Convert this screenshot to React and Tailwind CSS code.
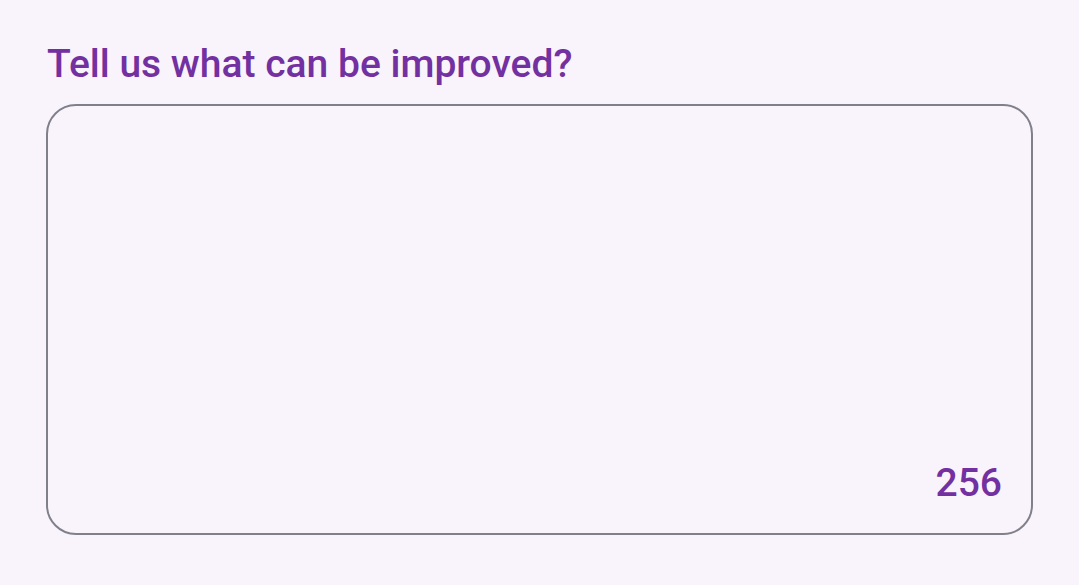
export default function App() {
  return (
    <div className="w-[1079px] h-[585px] bg-[#f9f3fc] pt-[40px] px-[46px]" style={{ fontFamily: 'Roboto, "Noto Sans", sans-serif' }}>
      <h1 className="text-[39px] leading-[48px] font-medium text-[#7330a0] pl-[1px]">
        Tell us what can be improved?
      </h1>
      <div className="mt-[16px] w-[987px] h-[431px] border-2 border-[#80808b] rounded-[30px] flex items-end justify-end pr-[29px] pb-[30px]">
        <span className="text-[39px] leading-none font-medium text-[#7330a0]">256</span>
      </div>
    </div>
  );
}
